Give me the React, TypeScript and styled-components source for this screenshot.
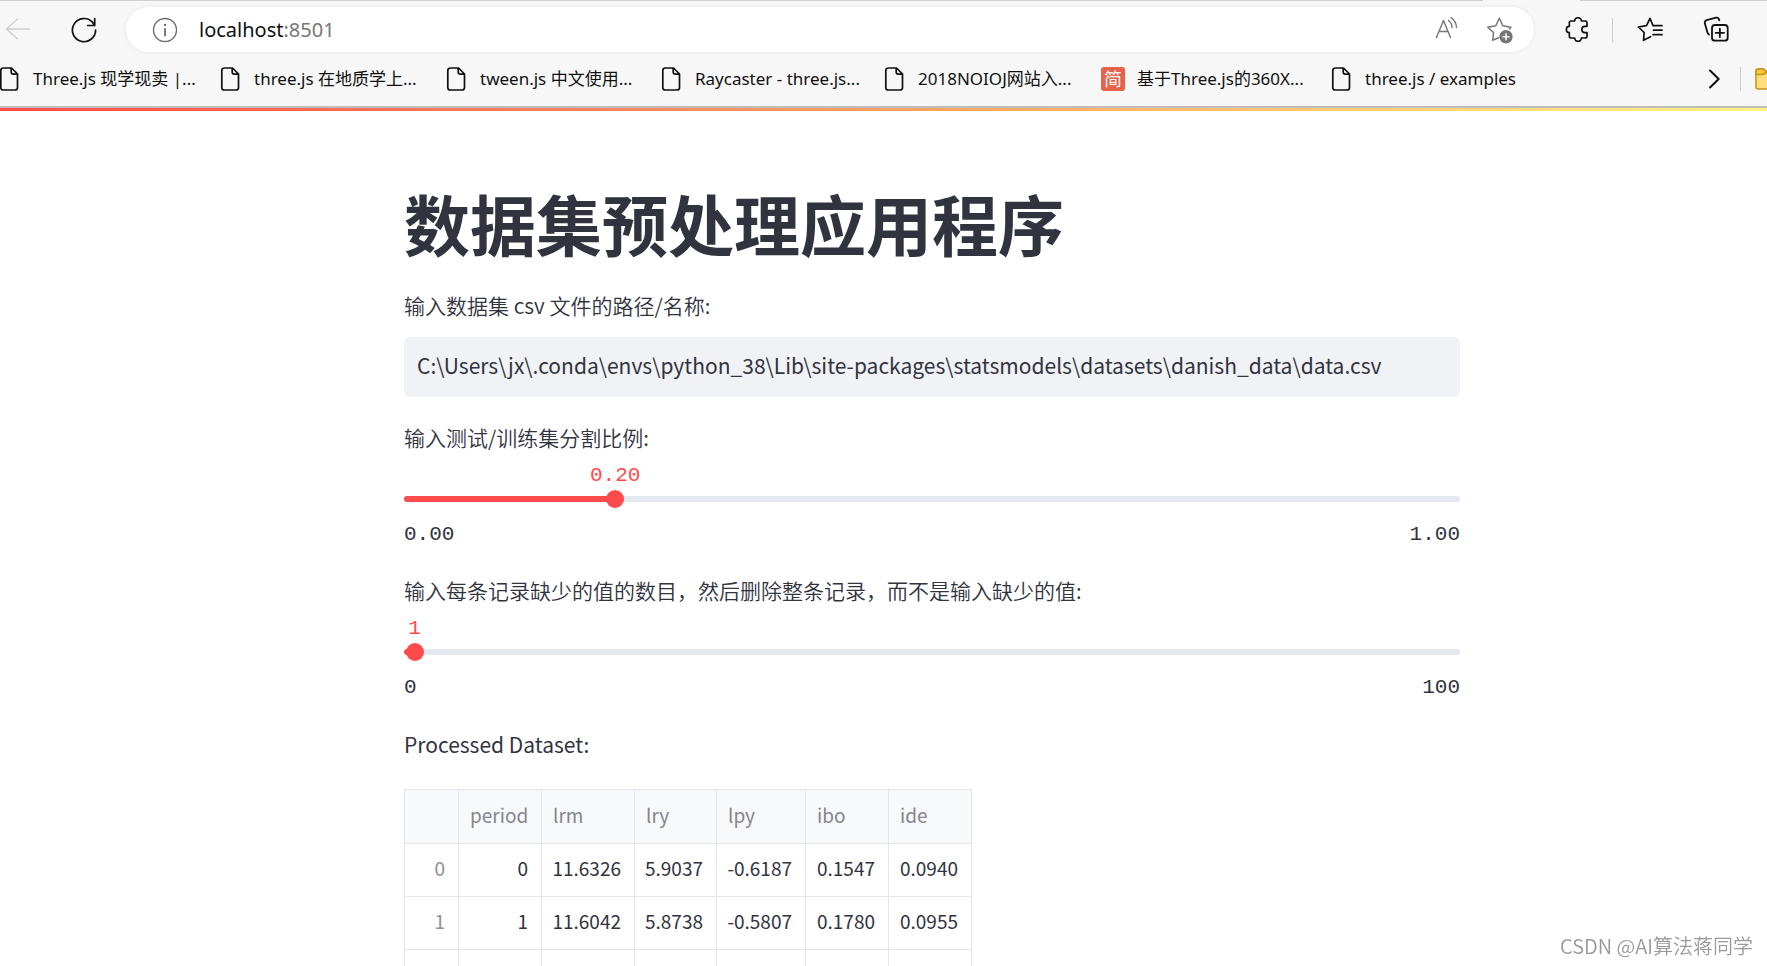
import React, { useState } from "react";
import styled, { createGlobalStyle } from "styled-components";

const GlobalStyle = createGlobalStyle`
  *, *::before, *::after { box-sizing: border-box; }
  html, body { margin: 0; height: 100%; }
  body { background: #ffffff; overflow: hidden; }
  #root { height: 100%; }
  button, input { font: inherit; color: inherit; }
`;

const uiFont = `"Noto Sans", "Noto Sans CJK SC", sans-serif`;
const appFont = `"Noto Sans CJK SC", sans-serif`;
const monoFont = `"Liberation Mono", monospace`;

const Shell = styled.div`
  height: 100%;
  display: flex;
  flex-direction: column;
  overflow: hidden;
`;

const BrowserChrome = styled.header`
  flex: none;
  background: #f7f7f7;
  border-bottom: 2px solid #bdbdbd;
  color: #101010;
  font-family: ${uiFont};
`;

const TabEdge = styled.div`
  display: grid;
  grid-template-columns: 1fr 97px 187px;
  height: 1px;
`;

const TabEdgeLine = styled.span<{ $open?: boolean }>`
  background: ${(p) => (p.$open ? "transparent" : "#cfcfcf")};
`;

const Toolbar = styled.div`
  display: flex;
  align-items: center;
  height: 57px;
  padding: 0 38px 0 5px;
`;

const IconButton = styled.button<{ $tone?: string }>`
  display: flex;
  flex: none;
  padding: 0;
  border: 0;
  background: none;
  color: ${(p) => p.$tone ?? "#101010"};
`;

const NavButtons = styled.div`
  display: flex;
  gap: 40px;
  margin-right: 29px;
`;

const AddressBar = styled.div`
  flex: 1;
  display: flex;
  align-items: center;
  gap: 21px;
  height: 45px;
  padding: 0 20px 0 26px;
  border-radius: 23px;
  background: #ffffff;
  box-shadow: 0 0 4px rgba(0, 0, 0, 0.08);
`;

const Address = styled.a`
  flex: 1;
  color: #101010;
  font-size: 20px;
  line-height: 28px;
  text-decoration: none;
`;

const Port = styled.span`
  color: #767676;
`;

const AddressActions = styled.div`
  display: flex;
  gap: 26px;
`;

const ToolbarActions = styled.div`
  display: flex;
  align-items: center;
  gap: 23px;
  margin-left: 31px;
`;

const Divider = styled.span`
  flex: none;
  width: 1px;
  height: 24px;
  background: #cccccc;
`;

const ActionPair = styled.div`
  display: flex;
  gap: 40px;
`;

const BookmarkBar = styled.nav`
  display: flex;
  align-items: center;
  height: 48px;
  padding-bottom: 6px;
  overflow: hidden;
`;

const BookmarkList = styled.ul`
  flex: 1;
  display: flex;
  gap: 25px;
  margin: 0 0 0 -3px;
  padding: 0;
  list-style: none;
`;

const BookmarkItem = styled.li<{ $width: number }>`
  flex: none;
  width: ${(p) => p.$width}px;
`;

const Bookmark = styled.a`
  display: flex;
  align-items: center;
  gap: 12px;
  color: #101010;
  font-size: 17px;
  line-height: 24px;
  white-space: nowrap;
  text-decoration: none;
`;

const JianBadge = styled.span`
  flex: none;
  width: 24px;
  height: 24px;
  border-radius: 3px;
  background: #e8614a;
  color: #ffffff;
  font-family: ${appFont};
  font-size: 18px;
  line-height: 23px;
  text-align: center;
`;

const Overflow = styled.div`
  flex: none;
  display: flex;
  align-items: center;
  gap: 14px;
  width: 62px;
`;

const Decoration = styled.div`
  flex: none;
  height: 3px;
  background: linear-gradient(90deg, #ff4b4b, #fffd80);
  background-size: 1863px 100%;
`;

const Page = styled.main`
  flex: 1;
  min-height: 0;
  overflow: hidden;
  padding: 69px 307px 0 404px;
  color: #31333f;
  font-family: ${appFont};
`;

const Title = styled.h1`
  margin: 0 0 28px;
  font-size: 66px;
  font-weight: 700;
  line-height: 84px;
`;

const Field = styled.div`
  display: flex;
  flex-direction: column;
  margin-bottom: 27px;
`;

const Label = styled.label`
  font-size: 21px;
  font-weight: 350;
  line-height: 26px;
`;

const PathInput = styled.input`
  height: 60px;
  margin-top: 19px;
  padding: 0 13px 4px;
  border: 0;
  border-radius: 6px;
  background: #f0f2f6;
  font-size: 21px;
`;

const ThumbValue = styled.output`
  align-self: flex-start;
  margin-top: 14px;
  color: #ff4b4b;
  font-family: ${monoFont};
  font-size: 21px;
  line-height: 24px;
  transform: translateX(-50%);
`;

const Track = styled.div`
  display: flex;
  align-items: center;
  height: 6px;
  margin: 8px 0 18px;
  border-radius: 3px;
`;

const Range = styled.input`
  flex: none;
  width: calc(100% + 18px);
  height: 18px;
  margin: 0 -9px;
  appearance: none;
  background: transparent;

  &::-webkit-slider-thumb {
    appearance: none;
    width: 18px;
    height: 18px;
    border-radius: 50%;
    background: #ff4b4b;
  }
`;

const Limits = styled.div`
  display: flex;
  justify-content: space-between;
  font-family: ${monoFont};
  font-size: 21px;
  line-height: 30px;
`;

const Caption = styled.p`
  margin: 27px 0 31px;
  font-size: 21px;
  line-height: 28px;
`;

const DataTable = styled.table`
  width: 567px;
  border-collapse: collapse;
  table-layout: fixed;
  font-size: 19px;
`;

const Cell = styled.td<{ $muted?: boolean }>`
  height: 53px;
  padding: 0 13px 5px 0;
  border: 1px solid #e6e7ea;
  color: ${(p) => (p.$muted ? "#8e9097" : "#31333f")};
  text-align: right;
`;

const HeadCell = styled.th`
  height: 54px;
  padding: 0 11px 4px;
  border: 1px solid #e6e7ea;
  background: #f8f9fb;
  color: #84868e;
  font-weight: 400;
  text-align: left;
`;

const Watermark = styled.div`
  position: fixed;
  right: 14px;
  bottom: 7px;
  color: #999999;
  font-family: ${appFont};
  font-size: 20px;
  font-weight: 350;
  line-height: 26px;
`;

const Glyph = styled.svg`
  flex: none;
  fill: none;
  stroke: currentColor;
  stroke-linecap: round;
  stroke-linejoin: round;
`;

type IconProps = { w?: number; h?: number; children: React.ReactNode; box?: string; stroke?: number };

const Icon = ({ w = 24, h = 24, box, stroke = 1.6, children }: IconProps) => (
  <Glyph width={w} height={h} viewBox={box ?? `0 0 ${w} ${h}`} strokeWidth={stroke} aria-hidden="true">
    {children}
  </Glyph>
);

const BackIcon = () => (
  <Icon w={26} stroke={1.3}>
    <path d="M1.5 12H24.5M12.5 2L1.5 12l11 10" />
  </Icon>
);

const ReloadIcon = () => (
  <Icon w={26} h={26} stroke={1.7}>
    <path d="M24.6 13A11.6 11.6 0 1 1 21.5 5.2L23.7 8.5M23.7 1.5v7h-7" />
  </Icon>
);

const InfoIcon = () => (
  <Icon w={26} h={26} stroke={1.4}>
    <circle cx="13" cy="13" r="11.5" />
    <path d="M13 12v6.5" strokeWidth="1.8" />
    <circle cx="13" cy="8" r="1.2" fill="currentColor" stroke="none" />
  </Icon>
);

const ReadAloudIcon = () => (
  <Icon w={26} stroke={1.4}>
    <path d="M2.5 21.5L9.5 4.5 16.5 21.5M5 15.5h9M14.5 4.5a9 9 0 0 1 3.5 7M17 1.5a13 13 0 0 1 5.5 10" />
  </Icon>
);

const StarAddIcon = () => (
  <Icon w={28} h={28} stroke={1.5}>
    <path d="M12.7 21.7L6.7 24.3 7.5 16.5 1.7 11.2 9.8 9.7 13.3 2.3 16.8 9.7 25 11.2 23.5 13" />
    <circle cx="20" cy="20.7" r="6.7" fill="currentColor" stroke="none" />
    <path d="M17 20.7h6M20 17.7v6" stroke="#ffffff" />
  </Icon>
);

const PuzzleIcon = () => (
  <Icon w={24} h={25} box="0 -1 72 75" stroke={5}>
    <path d="M18 11H29A10 10 0 0 1 49 11H61Q66 11 66 16V27H60A9 9 0 0 0 60 46H66V57Q66 62 61 62H49A10 10 0 0 1 29 62H18Q13 62 13 57V46A9 9.5 0 0 1 13 27V16Q13 11 18 11Z" />
  </Icon>
);

const FavoritesIcon = () => (
  <Icon w={27} h={27} stroke={1.7}>
    <path d="M14.5 20.7L7.5 24.3 8.2 16.5 2.3 11 10.5 9.7 14 2.3 17 9.7H26M17.5 14.2H26M17 18.7H26" />
  </Icon>
);

const CollectionsIcon = () => (
  <Icon w={26} h={26} stroke={1.8}>
    <rect x="9" y="9" width="15.7" height="15.7" rx="3" />
    <path d="M16.85 12.7v8.3M12.7 16.85h8.3M6 18.7Q4.7 17.5 4.3 16L1.9 7.5Q1.2 5 3.8 4.2L13 1.7Q15.6 1.2 16.3 4.3" />
  </Icon>
);

const FileIcon = () => (
  <Icon stroke={1.7}>
    <path d="M6.5 1H14.5L20.5 7V20.5Q20.5 23 18 23H6.2Q3.8 23 3.8 20.5V3.5Q3.8 1 6.5 1ZM14.2 1.2V5Q14.2 7.2 16.4 7.2H20.3" />
  </Icon>
);

const ChevronIcon = () => (
  <Icon w={21} h={24} stroke={2}>
    <path d="M5 3.5L13.7 12L5 20.5" />
  </Icon>
);

const FolderIcon = () => (
  <Icon w={28} h={24} stroke={1.5}>
    <path d="M1 20V4.5Q1 2 3.5 2H8L12 5H24Q26 5 26 7.5V20Q26 22 24 22H3.5Q1 22 1 20Z" fill="#ffdc7c" stroke="#c49316" />
    <path d="M1 7.5H8L12 5L8.5 2H3.5Q1 2 1 4.5Z" fill="#fdc63b" stroke="#c49316" />
  </Icon>
);

const bookmarks = [
  { title: "Three.js 现学现卖 |...", width: 196 },
  { title: "three.js 在地质学上...", width: 201 },
  { title: "tween.js 中文使用...", width: 190 },
  { title: "Raycaster - three.js...", width: 198 },
  { title: "2018NOIOJ网站入...", width: 194 },
  { title: "基于Three.js的360X...", width: 203, badge: "简" },
  { title: "three.js / examples", width: 190 },
];

const columns = [
  { name: "", width: 54 },
  { name: "period", width: 83 },
  { name: "lrm", width: 93 },
  { name: "lry", width: 82 },
  { name: "lpy", width: 89 },
  { name: "ibo", width: 83 },
  { name: "ide", width: 83 },
];

const rows = [
  ["0", "0", "11.6326", "5.9037", "-0.6187", "0.1547", "0.0940"],
  ["1", "1", "11.6042", "5.8738", "-0.5807", "0.1780", "0.0955"],
  ["", "", "", "", "", "", ""],
];

type SliderProps = {
  id: string;
  label: string;
  min: number;
  max: number;
  step: number;
  initial: number;
  digits: number;
};

const Slider = ({ id, label, min, max, step, initial, digits }: SliderProps) => {
  const [value, setValue] = useState(initial);
  const percent = ((value - min) / (max - min)) * 100;
  return (
    <Field>
      <Label htmlFor={id}>{label}</Label>
      <ThumbValue htmlFor={id} style={{ marginLeft: `${percent}%` }}>
        {value.toFixed(digits)}
      </ThumbValue>
      <Track style={{ background: `linear-gradient(90deg, #ff4b4b ${percent}%, #e4e8f0 ${percent}%)` }}>
        <Range
          id={id}
          type="range"
          min={min}
          max={max}
          step={step}
          value={value}
          onChange={(e) => setValue(Number(e.target.value))}
        />
      </Track>
      <Limits>
        <span>{min.toFixed(digits)}</span>
        <span>{max.toFixed(digits)}</span>
      </Limits>
    </Field>
  );
};

export default function App() {
  const [path, setPath] = useState(
    "C:\\Users\\jx\\.conda\\envs\\python_38\\Lib\\site-packages\\statsmodels\\datasets\\danish_data\\data.csv"
  );

  return (
    <Shell>
      <GlobalStyle />
      <BrowserChrome>
        <TabEdge>
          <TabEdgeLine />
          <TabEdgeLine $open />
          <TabEdgeLine />
        </TabEdge>
        <Toolbar>
          <NavButtons>
            <IconButton $tone="#cfcfcf" aria-label="Back"><BackIcon /></IconButton>
            <IconButton aria-label="Refresh"><ReloadIcon /></IconButton>
          </NavButtons>
          <AddressBar>
            <IconButton $tone="#6e6e6e" aria-label="Site information"><InfoIcon /></IconButton>
            <Address href="#">localhost<Port>:8501</Port></Address>
            <AddressActions>
              <IconButton $tone="#767676" aria-label="Read aloud"><ReadAloudIcon /></IconButton>
              <IconButton $tone="#767676" aria-label="Add to favorites"><StarAddIcon /></IconButton>
            </AddressActions>
          </AddressBar>
          <ToolbarActions>
            <IconButton aria-label="Extensions"><PuzzleIcon /></IconButton>
            <Divider />
            <ActionPair>
              <IconButton aria-label="Favorites"><FavoritesIcon /></IconButton>
              <IconButton aria-label="Collections"><CollectionsIcon /></IconButton>
            </ActionPair>
          </ToolbarActions>
        </Toolbar>
        <BookmarkBar aria-label="Bookmarks">
          <BookmarkList>
            {bookmarks.map((b) => (
              <BookmarkItem key={b.title} $width={b.width}>
                <Bookmark href="#">
                  {b.badge ? <JianBadge>{b.badge}</JianBadge> : <FileIcon />}
                  <span>{b.title}</span>
                </Bookmark>
              </BookmarkItem>
            ))}
          </BookmarkList>
          <Overflow>
            <IconButton aria-label="More bookmarks"><ChevronIcon /></IconButton>
            <Divider />
            <IconButton aria-label="Other bookmarks"><FolderIcon /></IconButton>
          </Overflow>
        </BookmarkBar>
      </BrowserChrome>
      <Decoration />
      <Page>
        <Title>数据集预处理应用程序</Title>
        <Field>
          <Label htmlFor="path">输入数据集 csv 文件的路径/名称:</Label>
          <PathInput id="path" type="text" value={path} onChange={(e) => setPath(e.target.value)} />
        </Field>
        <Slider id="ratio" label="输入测试/训练集分割比例:" min={0} max={1} step={0.01} initial={0.2} digits={2} />
        <Slider
          id="missing"
          label="输入每条记录缺少的值的数目，然后删除整条记录，而不是输入缺少的值:"
          min={0}
          max={100}
          step={1}
          initial={1}
          digits={0}
        />
        <Caption>Processed Dataset:</Caption>
        <DataTable>
          <colgroup>
            {columns.map((c) => (
              <col key={c.name} width={c.width} />
            ))}
          </colgroup>
          <thead>
            <tr>
              {columns.map((c) => (
                <HeadCell key={c.name} scope="col">{c.name}</HeadCell>
              ))}
            </tr>
          </thead>
          <tbody>
            {rows.map((row, r) => (
              <tr key={r}>
                {row.map((value, i) => (
                  <Cell key={i} $muted={i === 0}>{value}</Cell>
                ))}
              </tr>
            ))}
          </tbody>
        </DataTable>
      </Page>
      <Watermark>CSDN @AI算法蒋同学</Watermark>
    </Shell>
  );
}
